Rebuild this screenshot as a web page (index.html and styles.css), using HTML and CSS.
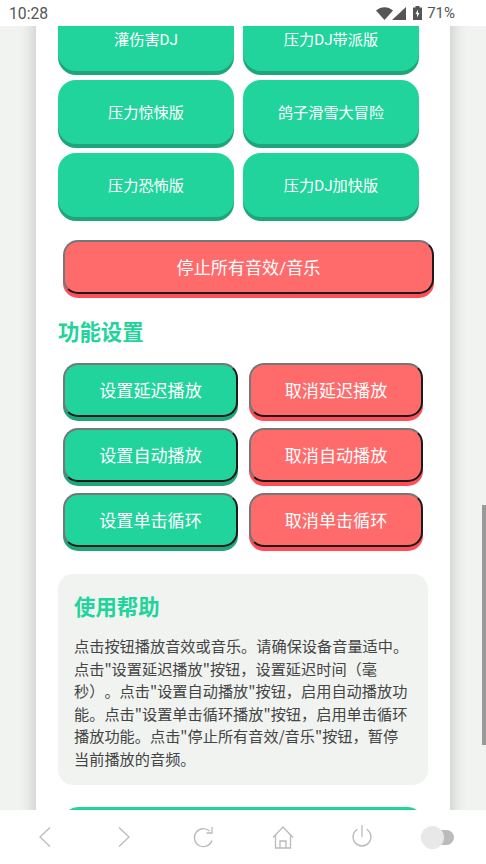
FILE: index.html
```html
<!DOCTYPE HTML>
<html>
<head>
 <title>音效按钮</title>
 <meta name="viewport" content="width=device-width, initial-scale=1">
 <link rel="stylesheet" href="styles.css">
</head>

<body>
<div class="status-bar">
  <span class="status-time">10:28</span>
  <div class="status-icons">
    <svg width="17" height="13" viewBox="0 0 17 13"><path d="M0 3.500C5 -1 12 -1 17 3.500L8.500 13Z" fill="#555"/></svg>
    <svg class="status-signal" width="14" height="13" viewBox="0 0 14 13"><path d="M14 0V13H0Z" fill="#555"/></svg>
    <svg class="status-battery" width="9" height="14" viewBox="0 0 9 14"><path d="M2.500 0H6.500V1.500H9V14H0V1.500H2.500Z" fill="#555"/><path d="M5 3.500L2.500 8H4V11.500L6.500 7H5Z" fill="#fff"/></svg>
    <span class="status-percent">71%</span>
  </div>
</div>

<div class="web-view">
  <div class="card">
    <div class="sound-grid">
      <div class="sound-button">灌伤害DJ</div>
      <div class="sound-button">压力DJ带派版</div>
      <div class="sound-button">压力惊悚版</div>
      <div class="sound-button">鸽子滑雪大冒险</div>
      <div class="sound-button">压力恐怖版</div>
      <div class="sound-button">压力DJ加快版</div>
    </div>

    <div class="action-button red stop-button">停止所有音效/音乐</div>

    <h2 class="section-title">功能设置</h2>

    <div class="settings-grid">
      <div class="action-button green">设置延迟播放</div>
      <div class="action-button red">取消延迟播放</div>
      <div class="action-button green">设置自动播放</div>
      <div class="action-button red">取消自动播放</div>
      <div class="action-button green">设置单击循环</div>
      <div class="action-button red">取消单击循环</div>
    </div>

    <div class="help-box">
      <h3 class="help-title">使用帮助</h3>
      <p class="help-text">点击按钮播放音效或音乐。请确保设备音量适中。点击"设置延迟播放"按钮，设置延迟时间（毫秒）。点击"设置自动播放"按钮，启用自动播放功能。点击"设置单击循环播放"按钮，启用单击循环播放功能。点击"停止所有音效/音乐"按钮，暂停当前播放的音频。</p>
    </div>

    <div class="next-button"></div>
  </div>
  <div class="scroll-thumb"></div>
</div>

<div class="nav-bar">
  <svg width="24" height="24" viewBox="0 0 24 24"><path d="M17 2.500L7 12L17 21.500" class="nav-line"/></svg>
  <svg width="24" height="24" viewBox="0 0 24 24"><path d="M7 2.500L17 12L7 21.500" class="nav-line"/></svg>
  <svg width="24" height="24" viewBox="0 0 24 24"><path d="M21 15.500A9 9 0 1 1 18.500 6M21 2V8H15.500" class="nav-line"/></svg>
  <svg width="24" height="24" viewBox="0 0 24 24"><path d="M2 12.500L12 2L22 12.500M4.500 10.500V23H19.500V10.500M9 23V16H15V23" class="nav-line"/></svg>
  <svg width="24" height="24" viewBox="0 0 24 24"><path d="M7.500 4.200A9 9 0 1 0 16.500 4.200M12 0V12" class="nav-line"/></svg>
  <div class="nav-toggle"><div class="nav-knob"></div></div>
</div>
</body>
</html>
```

FILE: styles.css
```css
html, body{
 margin:0;
 height:100%;
}
body{
 width:486px;
 height:864px;
 overflow:hidden;
 display:flex;
 flex-direction:column;
 font-family:Roboto,"Noto Sans CJK SC",sans-serif;
 background-color:#fff;
}

.status-bar{
 height:26px;
 flex:none;
 display:flex;
 align-items:center;
 justify-content:space-between;
 padding:0 31px 0 9px;
 color:#555;
 font-size:15.7px;
}
.status-icons{
 display:flex;
 align-items:center;
}
.status-signal{
 margin-left:-1px;
}
.status-battery{
 margin:0 5px 0 7px;
}
.status-percent{
 font-size:15px;
}

.web-view{
 flex:1;
 position:relative;
 overflow:hidden;
 background-color:#f0f3f0;
}
.card{
 width:370px;
 margin:0 36px;
 margin-top:-19px;
 padding:0 22px;
 background-color:#fff;
 box-shadow:0 0 16px rgba(0,0,0,.22);
}

.sound-grid{
 display:grid;
 grid-template-columns:176px 176px;
 column-gap:9px;
 row-gap:5px;
}
.sound-button{
 box-sizing:border-box;
 height:64px;
 padding-bottom:2px;
 display:flex;
 align-items:center;
 justify-content:center;
 border-radius:18px;
 background-color:#21d49b;
 box-shadow:0 4px 0 #1fa57b;
 color:#fff;
 font-size:15.2px;
 margin-bottom:4px;
}

.action-button{
 display:flex;
 align-items:center;
 justify-content:center;
 box-sizing:border-box;
 height:54px;
 padding-bottom:2px;
 border-radius:15px;
 border-style:solid;
 border-width:2px;
 border-color:#767676 #1a1a1a #1a1a1a #767676;
 color:#fff;
 font-size:17.1px;
}
.green{
 background-color:#21d49b;
 box-shadow:0 4px 0 #1fa57b;
}
.red{
 background-color:#ff6b6b;
 box-shadow:0 4px 0 #ff4d5a;
}
.stop-button{
 width:371px;
 margin:19px 0 0 5px;
}

.section-title{
 margin:23px 0 0;
 height:31px;
 line-height:31px;
 font-size:21.4px;
 color:#21d49b;
}

.settings-grid{
 display:grid;
 grid-template-columns:175px 174px;
 column-gap:11px;
 row-gap:11px;
 margin:15px 0 0 5px;
}

.help-box{
 margin-top:27px;
 padding:16px 16px 15px;
 border-radius:15px;
 background-color:#f0f3f0;
}
.help-title{
 margin:0 0 8px;
 font-size:21.4px;
 line-height:36px;
 color:#21d49b;
}
.help-text{
 margin:0;
 font-family:"Noto Sans CJK SC",sans-serif;
 font-size:15.2px;
 line-height:22.6px;
 color:#444;
 text-spacing-trim:space-all;
}

.next-button{
 height:60px;
 margin:22px 5px 0;
 border-radius:15px;
 background-color:#21d49b;
}

.scroll-thumb{
 position:absolute;
 right:0;
 top:479px;
 width:4px;
 height:240px;
 background-color:#999;
}

.nav-bar{
 height:54px;
 flex:none;
 display:flex;
 align-items:center;
 gap:55.2px;
 box-sizing:border-box;
 padding:0 0 0 33px;
 background-color:#fff;
}
.nav-line{
 fill:none;
 stroke:#bbb;
 stroke-width:1.3;
}
.nav-toggle{
 position:relative;
 width:33px;
 height:15px;
 margin-left:-8px;
 border-radius:8px;
 background-color:#bbb;
}
.nav-knob{
 position:absolute;
 left:0;
 top:-4px;
 width:23px;
 height:23px;
 border-radius:50%;
 background-color:#e8e8e8;
}
```
